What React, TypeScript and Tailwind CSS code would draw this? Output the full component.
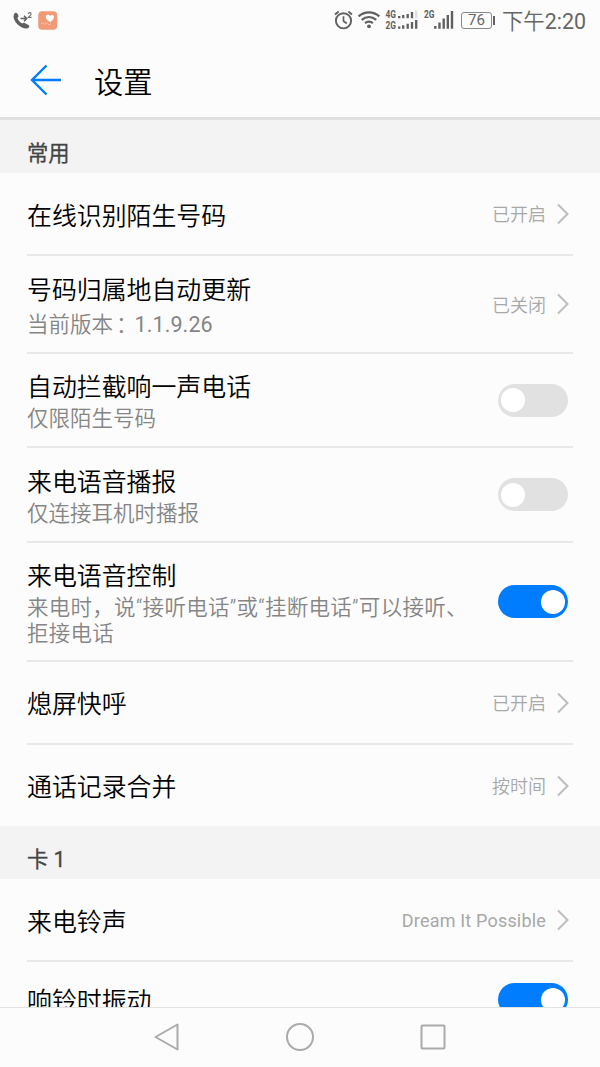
import type { ReactNode } from "react";
import clsx from "clsx";

type Row = {
  title: string;
  note?: ReactNode;
  value?: string;
  on?: boolean;
  height: string;
  textClass?: string;
  noteClass?: string;
};

const common: Row[] = [
  { title: "在线识别陌生号码", value: "已开启", height: "h-[83px]", textClass: "pt-[6px]" },
  {
    title: "号码归属地自动更新",
    note: (
      <>
        当前版本<span className="pl-[3px] tracking-[-3px]">：</span>
        <span className="font-normal tracking-[0.1px]">1.1.9.26</span>
      </>
    ),
    value: "已关闭",
    height: "h-[98px]",
    textClass: "pt-[3px]",
    noteClass: "mt-[4px]",
  },
  {
    title: "自动拦截响一声电话",
    note: "仅限陌生号码",
    on: false,
    height: "h-[94px]",
    textClass: "pt-[3px]",
    noteClass: "mt-px",
  },
  {
    title: "来电语音播报",
    note: "仅连接耳机时播报",
    on: false,
    height: "h-[95px]",
    textClass: "pt-[3px]",
    noteClass: "mt-px",
  },
  {
    title: "来电语音控制",
    note: "来电时，说“接听电话”或“挂断电话”可以接听、拒接电话",
    on: true,
    height: "h-[119px]",
    textClass: "pt-[4px]",
    noteClass: "mt-px tracking-[0.28px]",
  },
  { title: "熄屏快呼", value: "已开启", height: "h-[83px]", textClass: "pt-[5px]" },
  { title: "通话记录合并", value: "按时间", height: "h-[81px]", textClass: "pt-[4px]" },
];

const cardOne: Row[] = [
  { title: "来电铃声", value: "Dream It Possible", height: "h-[83px]", textClass: "pt-[6px]" },
  { title: "响铃时振动", on: true, height: "h-[75px]", textClass: "pt-[4px]" },
];

function StatusBar() {
  return (
    <div className="flex h-10 shrink-0 items-center pl-3 pr-[14px] text-[#666]">
      <svg width="48" height="24" viewBox="12 8 48 24" className="shrink-0">
        <path
          d="M14.6 13.2c1.2-1 2.3-.6 3 .7l.8 1.7c.4 1-.1 1.7-1 2.3.9 2.5 2.6 4.4 4.8 5.7.8-.8 1.6-1.1 2.5-.5l3.7 1.9c1.1.8 1.2 1.7.2 2.7-1.2 1.2-3.9 1.2-6 .1-4-2.1-7.9-5.6-8.9-9.8-.4-1.7-.1-3.1.9-4.8z"
          fill="#606060"
        />
        <path d="M20.5 18.5h6M24 15.8l2.7 2.7-2.7 2.7" fill="none" stroke="#606060" strokeWidth="1.5" />
        <path d="M28.3 14c.2-1.9 2.8-1.9 2.8.1 0 1.3-1.9 2.1-2.8 3.3h3.2" fill="none" stroke="#707070" strokeWidth="1.1" />
        <rect x="38.2" y="11.2" width="19" height="18.5" rx="4" fill="#f09a78" />
        <path
          d="M50.3 22c-3.2-1.8-4.5-3.2-4.5-5 0-2.4 3.1-3 4.3-.9 1.3-2 4.3-1.1 3.9 1.2-.3 1.9-1.7 3.4-3.7 4.7z"
          fill="#fff"
        />
        <path d="M41 23.5l2.5-.5 1.5 1.5 2-1.8 2 2.3 2-1.2" fill="none" stroke="#f7bfa4" strokeWidth="1" />
      </svg>

      <svg width="120" height="24" viewBox="334 8 120 24" className="ml-auto shrink-0" fill="none" stroke="#606060">
        <circle cx="343.5" cy="20.8" r="7.6" strokeWidth="1.9" />
        <path d="M343.5 16.3v4.7l3.2 2.5" strokeWidth="1.7" />
        <path d="M335 14.5l3.7-3M352 14.5l-3.7-3" strokeWidth="1.9" />
        <path
          d="M358.6 16.4c6-5.3 14.7-5.3 20.7 0M361.7 19.8c4.3-3.7 10.2-3.7 14.5 0M365 23.2c2.3-1.9 5.6-1.9 7.9 0"
          strokeWidth="2.2"
        />
        <circle cx="369" cy="26.3" r="1.9" fill="#606060" stroke="none" />
        <g fill="#606060" stroke="none" className="font-['Roboto'] text-[10px] font-bold">
          <text x="385.5" y="18.4" textLength="10.5" lengthAdjust="spacingAndGlyphs">4G</text>
          <text x="385.5" y="29" textLength="10.5" lengthAdjust="spacingAndGlyphs">2G</text>
          <text x="424" y="18.4" textLength="10.5" lengthAdjust="spacingAndGlyphs">2G</text>
        </g>
        <path d="M399.2 16v2.3M403.2 15v3.3M407.7 14v4.3M412 12v6.3" strokeWidth="2.3" />
        <path d="M416.2 10.5v7.8" stroke="#ddd" strokeWidth="2.3" />
        <path d="M399.2 26.5v2.3M403.2 25.2v3.6M407.7 23.7v5.1M412 22v6.8M416.2 20v8.8" strokeWidth="2.3" />
        <path d="M435.3 26v2.7M439.5 22.5v6.2M443.7 18.5v10.2M447.8 15v13.7M452 11v17.7" strokeWidth="2.4" />
      </svg>
      <div className="ml-[7px] flex h-[17px] w-[31px] shrink-0 items-center justify-center rounded-[3px] border border-[#888] text-[15px] font-normal leading-none">
        76
      </div>
      <div className="ml-px h-[9px] w-[2px] shrink-0 bg-[#606060]" />
      <span className="ml-[7px] whitespace-nowrap pt-[3px] text-[21.4px] leading-[37px]">
        下午<span className="font-normal">2:20</span>
      </span>
    </div>
  );
}

function Toggle({ on }: { on: boolean }) {
  return (
    <span
      className={clsx(
        "mr-[5px] flex h-[33px] w-[70px] shrink-0 items-center rounded-full px-[3px]",
        on ? "justify-end bg-[#007dff]" : "bg-[#e1e1e1]",
      )}
    >
      <span className="size-6 rounded-full bg-white" />
    </span>
  );
}

function SettingRow({ row, last }: { row: Row; last: boolean }) {
  return (
    <div
      className={clsx(
        "mx-[27px] flex shrink-0 items-center justify-between",
        row.height,
        !last && "border-b-2 border-[#e8e8e8]",
      )}
    >
      <div className={clsx("w-[446px]", row.textClass)}>
        <div className="text-[24.9px] leading-[34px] text-black">{row.title}</div>
        {row.note && (
          <div className={clsx("text-[21.5px] leading-[26px] text-[#858585]", row.noteClass)}>{row.note}</div>
        )}
      </div>
      {row.value && (
        <div className="flex shrink-0 items-center whitespace-nowrap text-[18px] text-[#a8a8a8]">
          <span className={clsx("pt-[2px]", /^[A-Z]/.test(row.value) && "font-normal tracking-[0.18px]")}>
            {row.value}
          </span>
          <svg width="12" height="22" viewBox="0 0 12 22" fill="none" className="ml-[11px] mr-1">
            <path d="M1 1.5L10.5 11L1 20.5" stroke="#bdbdbd" strokeWidth="2" />
          </svg>
        </div>
      )}
      {row.on !== undefined && <Toggle on={row.on} />}
    </div>
  );
}

function Section({ title, rows }: { title: string; rows: Row[] }) {
  return (
    <section className="flex shrink-0 flex-col">
      <h2 className="h-[53px] bg-[#f3f3f3] pl-[27px] pt-[14px] text-[21.3px] font-normal leading-[39px] text-[#444] [-webkit-text-stroke:0.3px_#444]">
        {title}
      </h2>
      {rows.map((row, i) => (
        <SettingRow key={row.title} row={row} last={i === rows.length - 1} />
      ))}
    </section>
  );
}

export default function App() {
  return (
    <div className="flex h-[1067px] w-[600px] flex-col overflow-hidden bg-[#fcfcfc] font-['Roboto','Noto_Sans_CJK_SC',sans-serif] [font-weight:350]">
      <StatusBar />
      <header className="flex h-20 shrink-0 items-center border-b-[3px] border-[#e0e0e0] pl-[30px] pt-[3px]">
        <svg width="32" height="32" viewBox="0 0 32 32" fill="none" stroke="#007dff" strokeWidth="2.4">
          <path d="M31 16H2M16.5 1.5L2 16l14.5 14.5" />
        </svg>
        <h1 className="ml-8 pt-[5px] text-[29.3px] leading-10 text-black [font-weight:350]">设置</h1>
      </header>
      <main className="flex min-h-0 flex-1 flex-col overflow-hidden">
        <Section title="常用" rows={common} />
        <Section title="卡 1" rows={cardOne} />
      </main>
      <nav className="flex h-[60px] shrink-0 items-center justify-center gap-[105px] border-t border-[#e2e2e2] pb-[2px]">
        <svg width="28" height="28" viewBox="0 0 28 28" fill="none" stroke="#aaa" strokeWidth="2">
          <path d="M24.5 1.5v25L2.5 14z" strokeLinejoin="round" />
        </svg>
        <svg width="28" height="28" viewBox="0 0 28 28" fill="none" stroke="#aaa" strokeWidth="2">
          <circle cx="14" cy="14" r="13" />
        </svg>
        <svg width="28" height="28" viewBox="0 0 28 28" fill="none" stroke="#aaa" strokeWidth="2">
          <rect x="2.5" y="2.5" width="23" height="23" rx="1" />
        </svg>
      </nav>
    </div>
  );
}
